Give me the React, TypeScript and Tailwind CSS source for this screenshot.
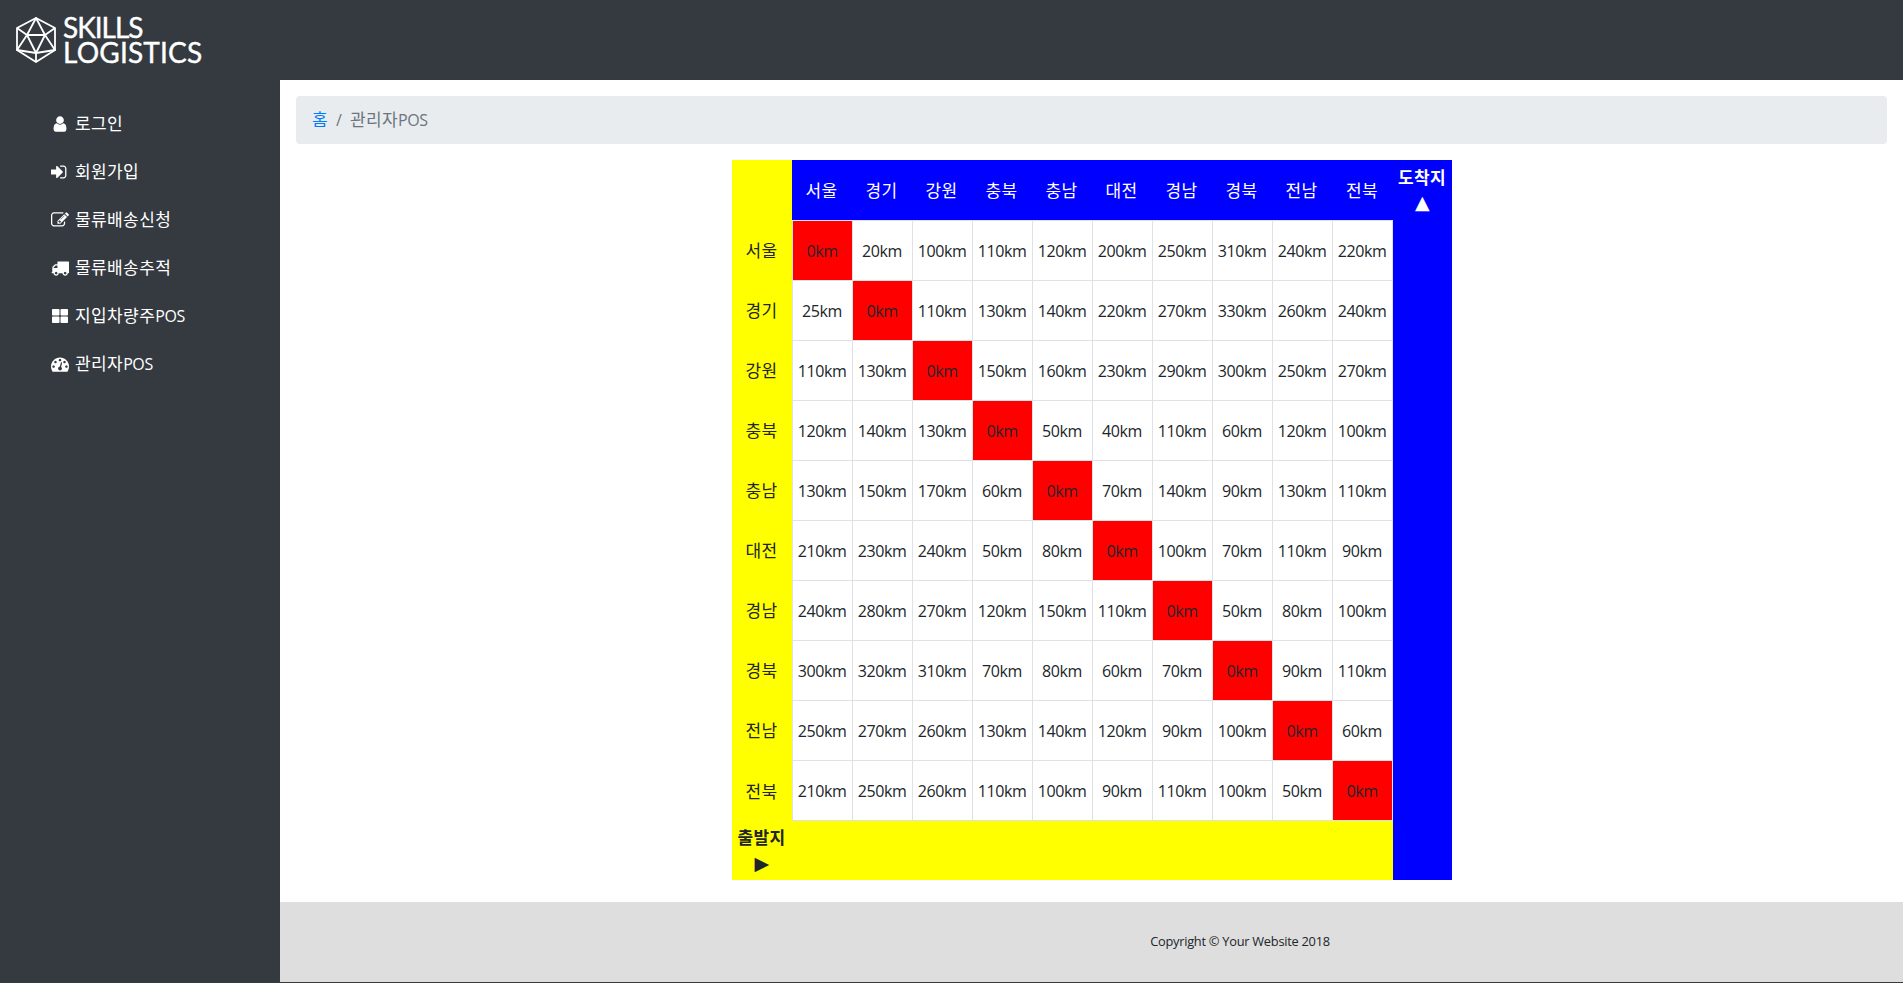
import { FaThLarge } from "react-icons/fa";

const cities = ["서울", "경기", "강원", "충북", "충남", "대전", "경남", "경북", "전남", "전북"];

const distances = [
  [0, 20, 100, 110, 120, 200, 250, 310, 240, 220],
  [25, 0, 110, 130, 140, 220, 270, 330, 260, 240],
  [110, 130, 0, 150, 160, 230, 290, 300, 250, 270],
  [120, 140, 130, 0, 50, 40, 110, 60, 120, 100],
  [130, 150, 170, 60, 0, 70, 140, 90, 130, 110],
  [210, 230, 240, 50, 80, 0, 100, 70, 110, 90],
  [240, 280, 270, 120, 150, 110, 0, 50, 80, 100],
  [300, 320, 310, 70, 80, 60, 70, 0, 90, 110],
  [250, 270, 260, 130, 140, 120, 90, 100, 0, 60],
  [210, 250, 260, 110, 100, 90, 110, 100, 50, 0],
];

// Font Awesome 4 glyph shapes, 1792 box
const faPaths = {
  user: "M1536 1399q0 109-62.5 187t-150.5 78h-854q-88 0-150.5-78t-62.5-187q0-85 8.5-160.5t31.5-152 58.5-131 94-89 134.5-34.5q131 128 313 128t313-128q76 0 134.5 34.5t94 89 58.5 131 31.5 152 8.5 160.5zm-256-887q0 159-112.5 271.5t-271.5 112.5-271.5-112.5-112.5-271.5 112.5-271.5 271.5-112.5 271.5 112.5 112.5 271.5z",
  signIn: "M1184 896q0 26-19 45l-544 544q-19 19-45 19t-45-19-19-45v-288h-448q-26 0-45-19t-19-45v-384q0-26 19-45t45-19h448v-288q0-26 19-45t45-19 45 19l544 544q19 19 19 45zm352-352v704q0 119-84.5 203.5t-203.5 84.5h-320q-13 0-22.5-9.5t-9.5-22.5q0-4-1-20t-.5-26.5 3-23.5 10-19.5 20.5-6.5h320q66 0 113-47t47-113v-704q0-66-47-113t-113-47h-312l-11.5-1-11.5-3-8-5.5-7-9-2-13.5q0-4-1-20t-.5-26.5 3-23.5 10-19.5 20.5-6.5h320q119 0 203.5 84.5t84.5 203.5z",
  edit: "M888 1184l116-116-152-152-116 116v56h96v96h56zm440-720q-16-16-33 1l-350 350q-17 17-1 33t33-1l350-350q17-17 1-33zm80 594v190q0 119-84.5 203.5t-203.5 84.5h-832q-119 0-203.5-84.5t-84.5-203.5v-832q0-119 84.5-203.5t203.5-84.5h832q63 0 117 25 15 7 18 23 3 17-9 29l-49 49q-14 14-32 8-23-6-45-6h-832q-66 0-113 47t-47 113v832q0 66 47 113t113 47h832q66 0 113-47t47-113v-126q0-13 9-22l64-64q15-15 35-7t20 29zm-96-738l288 288-672 672h-288v-288zm444 132l-92 92-288-288 92-92q28-28 68-28t68 28l152 152q28 28 28 68t-28 68z",
  truck: "M640 1408q0-52-38-90t-90-38-90 38-38 90 38 90 90 38 90-38 38-90zm-384-512h384v-256h-158q-13 0-22 9l-195 195q-9 9-9 22v30zm1280 512q0-52-38-90t-90-38-90 38-38 90 38 90 90 38 90-38 38-90zm256-1088v1024q0 15-4 26.5t-13.5 18.5-16.5 11.5-23.5 6-22.5 2-25.5 0-22.5-.5q0 106-75 181t-181 75-181-75-75-181h-384q0 106-75 181t-181 75-181-75-75-181h-64q-3 0-22.5.5t-25.5 0-22.5-2-23.5-6-16.5-11.5-13.5-18.5-4-26.5q0-26 19-45t45-19v-320q0-8-.5-35t0-38 2.5-34.5 6.5-37 14-30.5 22.5-30l198-198q19-19 50.5-32t58.5-13h160v-192q0-26 19-45t45-19h1024q26 0 45 19t19 45z",
  gauge: "M384 1152q0-53-37.5-90.5t-90.5-37.5-90.5 37.5-37.5 90.5 37.5 90.5 90.5 37.5 90.5-37.5 37.5-90.5zm192-448q0-53-37.5-90.5t-90.5-37.5-90.5 37.5-37.5 90.5 37.5 90.5 90.5 37.5 90.5-37.5 37.5-90.5zm428 481l101-382q6-26-7.5-48.5t-38.5-29.5-48 6.5-30 39.5l-101 382q-60 5-107 43.5t-63 98.5q-20 77 20 146t117 89 146-20 89-117q16-60-6-117t-72-91zm660-33q0-53-37.5-90.5t-90.5-37.5-90.5 37.5-37.5 90.5 37.5 90.5 90.5 37.5 90.5-37.5 37.5-90.5zm-640-640q0-53-37.5-90.5t-90.5-37.5-90.5 37.5-37.5 90.5 37.5 90.5 90.5 37.5 90.5-37.5 37.5-90.5zm448 192q0-53-37.5-90.5t-90.5-37.5-90.5 37.5-37.5 90.5 37.5 90.5 90.5 37.5 90.5-37.5 37.5-90.5zm320 448q0 261-141 483-19 29-54 29h-1402q-35 0-54-29-141-221-141-483 0-182 71-348t191-286 286-191 348-71 348 71 286 191 191 286 71 348z",
};

function FaIcon({ d }: { d: string }) {
  return (
    <svg viewBox="0 0 1792 1792" className="w-[18px] h-[18px] fill-white">
      <path d={d} />
    </svg>
  );
}

const menu = [
  { label: "로그인", latin: "", icon: <FaIcon d={faPaths.user} /> },
  { label: "회원가입", latin: "", icon: <FaIcon d={faPaths.signIn} /> },
  { label: "물류배송신청", latin: "", icon: <FaIcon d={faPaths.edit} /> },
  { label: "물류배송추적", latin: "", icon: <FaIcon d={faPaths.truck} /> },
  { label: "지입차량주", latin: "POS", icon: <span className="w-[18px] flex justify-center"><FaThLarge className="w-4 h-4 text-white" /></span> },
  { label: "관리자", latin: "POS", icon: <FaIcon d={faPaths.gauge} /> },
];

function Logo() {
  return (
    <div className="flex items-center gap-[7px] pl-[16px]">
      <svg width="40" height="46" viewBox="0 0 40 46" fill="none" stroke="white" strokeWidth="1.8" strokeLinejoin="round">
        <path d="M20 1 L39 11 V33 L20 45 L1 33 V11 Z" />
        <path d="M20 1 L11 18 H29 Z" />
        <path d="M1 11 L11 18 L1 33 L20 36 L39 33 L29 18 L39 11" />
        <path d="M11 18 L20 36 L29 18" />
        <path d="M20 36 V45" />
      </svg>
      <div className="font-['Lato',sans-serif] text-white text-[28px] leading-[25px] [-webkit-text-stroke:0.4px_white]">
        <div className="tracking-[-1px]">SKILLS</div>
        <div className="tracking-[0.2px]">LOGISTICS</div>
      </div>
    </div>
  );
}

function DistanceTable() {
  return (
    <table className="table-fixed w-[720px] border-separate border-spacing-0 text-[#212529] text-center leading-6 tracking-[-0.4px]">
      <colgroup>
        <col className="w-[60px]" />
        {cities.map((city, i) => (
          <col key={city} className={i === 9 ? "w-[61px]" : "w-[60px]"} />
        ))}
        <col className="w-[59px]" />
      </colgroup>
      <tbody>
        <tr className="h-[60px]">
          <td className="bg-[#ffff00] p-0" />
          {cities.map((city) => (
            <th key={city} className="bg-[#0000ff] text-white font-normal text-[17px] tracking-[0.4px] p-0 pt-[2px]">
              {city}
            </th>
          ))}
          <th rowSpan={12} className="bg-[#0000ff] text-white font-bold align-top p-0">
            <div className="pt-[5px] leading-[25px] text-[17px] tracking-[0.4px]">도착지</div>
            <div className="leading-[24px] text-[19px] font-['DejaVu_Sans',sans-serif]">▲</div>
          </th>
        </tr>
        {distances.map((row, i) => (
          <tr key={cities[i]} className={i === 9 ? "h-[61px]" : "h-[60px]"}>
            <th className="bg-[#ffff00] font-normal text-[17px] tracking-[0.4px] p-0 pt-[2px]">{cities[i]}</th>
            {row.map((km, j) => (
              <td
                key={j}
                className={`border-l border-t border-[#dee2e6] p-0 text-base ${km === 0 ? "bg-[#ff0000]" : "bg-white"} ${j === 9 ? "border-r" : ""} ${i === 9 ? "border-b" : ""}`}
              >
                {km}km
              </td>
            ))}
          </tr>
        ))}
        <tr className="h-[59px]">
          <th className="bg-[#ffff00] font-bold p-0">
            <div className="leading-[25px] text-[17px] tracking-[0.4px]">출발지</div>
            <div className="leading-[26px] text-[19px] font-['DejaVu_Sans',sans-serif]">▶</div>
          </th>
          <td colSpan={10} className="bg-[#ffff00] p-0" />
        </tr>
      </tbody>
    </table>
  );
}

export default function App() {
  return (
    <div className="min-h-screen flex flex-col bg-[#343a40] font-['Open_Sans','Noto_Sans_CJK_KR',sans-serif]">
      <header className="h-20 flex items-center">
        <Logo />
      </header>
      <div className="flex h-[902px]">
        <nav className="w-[280px] shrink-0 pt-5 pl-[51px]">
          {menu.map((item) => (
            <div key={item.label} className="h-12 flex items-center gap-[6px] text-white">
              {item.icon}
              <span className="text-[17px] tracking-[0.4px]">
                {item.label}
                {item.latin && <span className="text-base tracking-[-0.4px]">{item.latin}</span>}
              </span>
            </div>
          ))}
        </nav>
        <main className="flex-1 flex flex-col bg-white">
          <div className="mx-4 mt-4 h-12 flex items-center px-4 bg-[#e9ecef] rounded text-base">
            <span className="text-[#007bff] text-[17px] tracking-[0.4px]">홈</span>
            <span className="text-[#6c757d] px-2">/</span>
            <span className="text-[#6c757d] text-[17px] tracking-[0.4px]">
              관리자<span className="text-base tracking-[-0.4px]">POS</span>
            </span>
          </div>
          <div className="mt-4 flex justify-center">
            <DistanceTable />
          </div>
          <footer className="mt-[22px] h-20 flex items-center justify-center pl-[297px] bg-[#dedede] text-[#212529] text-[12.8px] tracking-[-0.25px]">
            Copyright © Your Website 2018
          </footer>
        </main>
      </div>
    </div>
  );
}
